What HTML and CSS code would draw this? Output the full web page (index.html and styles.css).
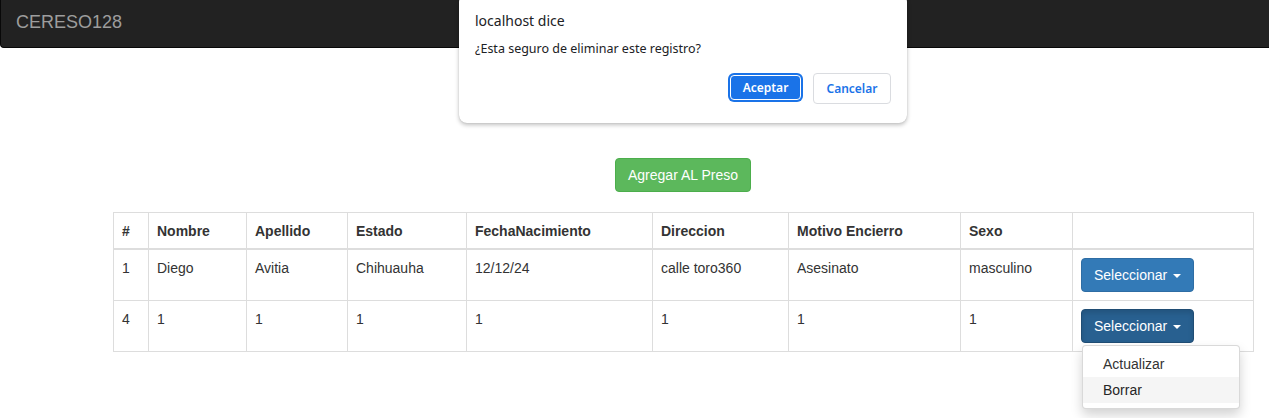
FILE: index.html
```html
<!DOCTYPE html>
<html lang="es">
<head>
<meta charset="utf-8">
<title>CERESO128</title>
<link rel="stylesheet" href="styles.css">
</head>
<body>
<nav class="navbar">
  <a class="brand" href="#">CERESO128</a>
</nav>

<main class="content">
  <div class="actions">
    <button class="btn btn-success">Agregar AL Preso</button>
  </div>
  <table class="grid">
    <colgroup>
      <col class="c1"><col class="c2"><col class="c3"><col class="c4"><col class="c5"><col class="c6"><col class="c7"><col class="c8"><col class="c9">
    </colgroup>
    <thead>
      <tr>
        <th>#</th><th>Nombre</th><th>Apellido</th><th>Estado</th><th>FechaNacimiento</th><th>Direccion</th><th>Motivo Encierro</th><th>Sexo</th><th></th>
      </tr>
    </thead>
    <tbody>
      <tr>
        <td>1</td><td>Diego</td><td>Avitia</td><td>Chihuauha</td><td>12/12/24</td><td>calle toro360</td><td>Asesinato</td><td>masculino</td>
        <td>
          <div class="btn-group">
            <button class="btn btn-primary">Seleccionar <span class="caret"></span></button>
          </div>
        </td>
      </tr>
      <tr>
        <td>4</td><td>1</td><td>1</td><td>1</td><td>1</td><td>1</td><td>1</td><td>1</td>
        <td>
          <div class="btn-group">
            <button class="btn btn-primary active">Seleccionar <span class="caret"></span></button>
            <ul class="dropdown-menu">
              <li><a href="#">Actualizar</a></li>
              <li><a href="#" class="hover">Borrar</a></li>
            </ul>
          </div>
        </td>
      </tr>
    </tbody>
  </table>
</main>

<div class="dialog" role="alertdialog">
  <div class="dialog-title">localhost dice</div>
  <div class="dialog-msg">¿Esta seguro de eliminar este registro?</div>
  <div class="dialog-buttons">
    <button class="dbtn dbtn-ok">Aceptar</button>
    <button class="dbtn dbtn-cancel">Cancelar</button>
  </div>
</div>
</body>
</html>
```

FILE: styles.css
```css
* { box-sizing: border-box; }
html, body { margin: 0; padding: 0; }
body {
  font-family: "Liberation Sans", Arial, sans-serif;
  font-size: 14px;
  line-height: 1.42857;
  color: #333;
  background: #fff;
  min-height: 418px;
}

.navbar {
  height: 48px;
  background: #222;
  border-bottom: 1px solid #080808;
  border-left: 1px solid #080808;
  border-radius: 0 0 0 4px;
  margin-right: -4px;
}
.brand {
  display: inline-block;
  padding: 12px 15px;
  font-size: 18px;
  line-height: 20px;
  color: #9d9d9d;
  text-decoration: none;
}

.content {
  padding: 110px 16px 80px 113px;
}
.actions {
  width: 1140px;
  display: flex;
  justify-content: center;
  margin-bottom: 20px;
}

.btn {
  display: inline-block;
  font-family: inherit;
  font-size: 14px;
  line-height: 20px;
  padding: 6px 12px;
  border: 1px solid transparent;
  border-radius: 4px;
  cursor: pointer;
  color: #fff;
}
.btn-success { background: #5cb85c; border-color: #4cae4c; }
.btn-primary { background: #337ab7; border-color: #2e6da4; }
.btn-primary.active { background: #286090; border-color: #204d74; box-shadow: inset 0 3px 5px rgba(0,0,0,.125); }
.caret {
  display: inline-block;
  width: 0; height: 0;
  margin-left: 2px;
  vertical-align: middle;
  border-top: 4px solid #fff;
  border-left: 4px solid transparent;
  border-right: 4px solid transparent;
}

.grid {
  width: 1140px;
  table-layout: fixed;
  border-collapse: collapse;
  border: 1px solid #ddd;
}
.c1 { width: 35px; } .c2 { width: 98px; } .c3 { width: 101px; } .c4 { width: 119px; }
.c5 { width: 186px; } .c6 { width: 136px; } .c7 { width: 172px; } .c8 { width: 112px; } .c9 { width: 181px; }
.grid th, .grid td {
  border: 1px solid #ddd;
  padding: 8px;
  text-align: left;
  vertical-align: top;
  line-height: 20px;
}
.grid th { font-weight: bold; vertical-align: bottom; }
.grid thead th { border-bottom-width: 2px; padding-bottom: 7px; }

.btn-group { position: relative; display: inline-block; vertical-align: top; }
.dropdown-menu {
  position: absolute;
  top: 100%;
  left: 1px;
  margin: 2px 0 0;
  padding: 5px 0;
  list-style: none;
  min-width: 158px;
  background: #fff;
  border: 1px solid rgba(0,0,0,.15);
  border-radius: 4px;
  box-shadow: 0 6px 12px rgba(0,0,0,.175);
  z-index: 10;
}
.dropdown-menu a {
  display: block;
  padding: 3px 20px;
  line-height: 20px;
  color: #333;
  text-decoration: none;
}
.dropdown-menu a.hover { background: #f5f5f5; color: #262626; }

.dialog {
  position: absolute;
  top: -6px;
  left: 459px;
  width: 448px;
  background: #fff;
  border-radius: 8px;
  box-shadow: 0 2px 4px rgba(0,0,0,.25), 0 0 1px rgba(0,0,0,.2);
  padding: 16px 16px 19px;
  font-family: "Noto Sans", "Open Sans", sans-serif;
  color: #202124;
  z-index: 20;
}
.dialog-title {
  font-size: 14px;
  line-height: 20px;
  margin-top: 1px;
}
.dialog-msg {
  font-size: 12.5px;
  line-height: 18px;
  margin-top: 9px;
}
.dialog-buttons {
  display: flex;
  justify-content: flex-end;
  gap: 10px;
  margin-top: 15px;
}
.dbtn {
  font-family: inherit;
  font-size: 12px;
  font-weight: 600;
  border-radius: 4px;
  height: 30px;
  padding: 0;
  cursor: pointer;
}
.dbtn-ok {
  width: 71px;
  height: 25px;
  margin: 2px;
  background: #1a73e8;
  color: #fff;
  border: 1px solid #fff;
  box-shadow: 0 0 0 2px #1a73e8;
}
.dbtn-cancel {
  width: 78px;
  height: 31px;
  background: #fff;
  color: #1a73e8;
  border: 1px solid #dadce0;
}
```
